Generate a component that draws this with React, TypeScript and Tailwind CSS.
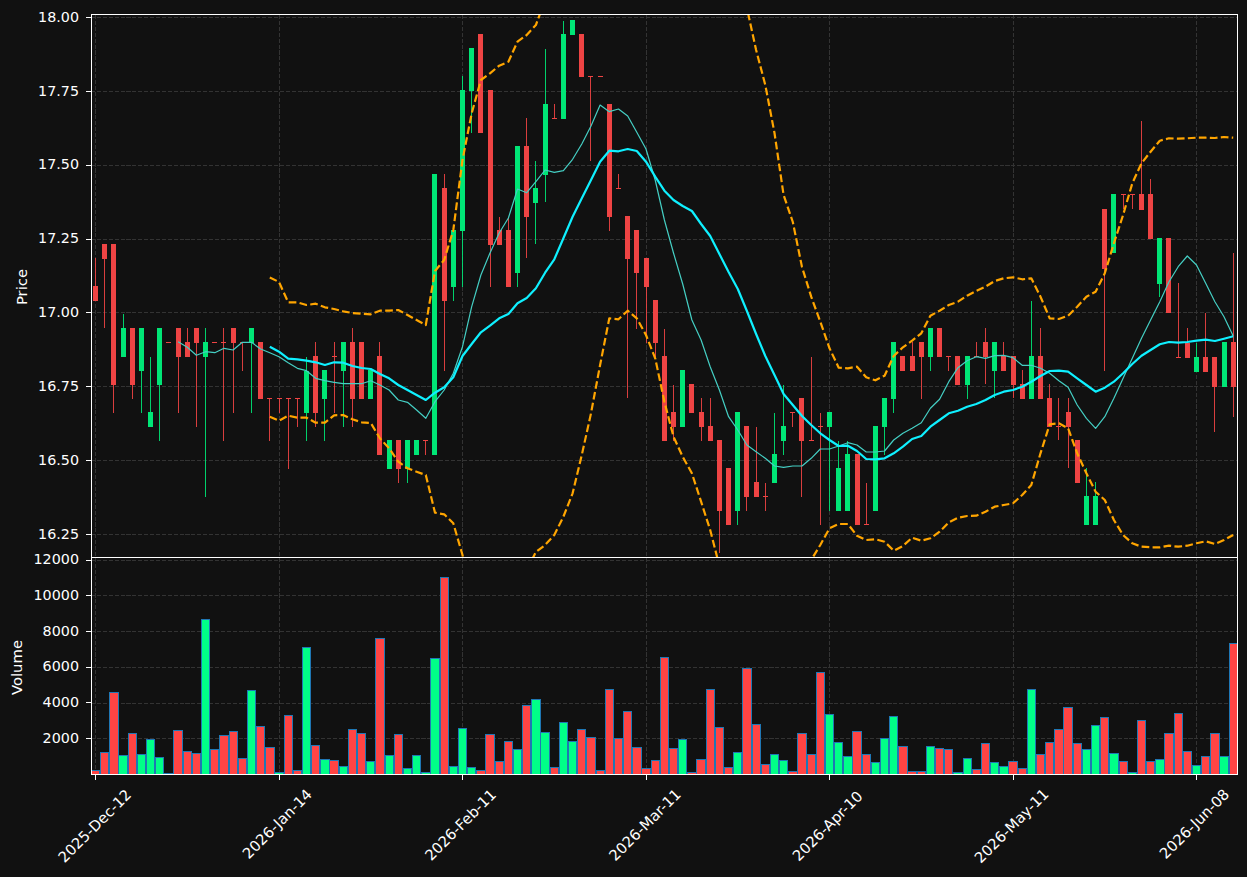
const X = (i: number) => 95.5 + 9.175 * i;

// type, bodyTop, bodyBottom, wickTop, wickBottom (page pixels)
const candles: [string, number, number, number, number][] = [
  ['r',286,301,258,301],['r',244,259,244,328],['r',244,385,244,413],['g',328,357,314,357],['r',328,385,328,399],
  ['g',328,371,328,413],['g',412,427,357,427],['g',328,385,328,441],['r',342,342,342,342],['r',328,357,328,413],
  ['r',342,357,328,357],['r',328,343,328,427],['g',342,357,328,497],['r',342,342,342,342],['r',342,342,328,441],
  ['r',328,343,328,413],['r',342,342,342,371],['g',328,343,328,413],['r',342,399,342,399],['r',398,398,398,441],
  ['r',398,398,398,413],['r',398,398,398,469],['r',398,398,398,427],['g',371,413,357,441],['r',356,413,342,427],
  ['g',370,399,370,441],['r',356,356,342,413],['g',342,371,342,427],['r',342,399,328,427],['r',342,399,342,399],
  ['g',370,399,370,399],['r',356,455,342,455],['g',440,469,440,469],['r',440,469,440,483],['g',440,469,440,483],
  ['g',440,455,440,455],['r',440,440,440,455],['g',174,455,174,455],['r',188,301,174,371],['g',230,287,230,301],
  ['g',90,231,76,287],['g',48,91,48,133],['r',34,133,34,133],['r',90,245,90,287],['r',230,245,217,245],
  ['r',230,287,217,287],['g',146,273,146,287],['r',146,217,118,258],['g',188,203,161,244],['g',104,175,49,202],
  ['r',118,118,104,118],['g',34,119,21,119],['g',20,35,20,35],['r',34,77,34,77],['r',76,76,76,161],
  ['r',76,76,76,76],['r',104,217,104,231],['r',188,188,174,188],['r',216,259,216,398],['r',230,273,230,329],
  ['r',258,287,258,343],['r',300,343,300,357],['r',356,441,329,441],['r',412,427,385,441],['g',370,427,370,427],
  ['r',384,413,384,413],['r',412,427,398,441],['r',426,441,398,441],['r',440,511,440,553],['r',468,525,468,525],
  ['g',412,511,412,525],['r',426,497,426,511],['r',482,497,427,497],['r',496,496,483,511],['g',454,483,413,483],
  ['g',426,441,385,455],['r',412,412,412,427],['r',398,441,398,497],['r',440,440,357,440],['r',426,426,413,525],
  ['g',412,427,412,511],['g',468,511,441,511],['g',454,511,441,511],['r',454,525,454,525],['r',524,524,483,524],
  ['g',426,511,426,511],['g',398,427,398,455],['g',342,399,342,413],['r',356,371,356,371],['r',356,371,342,371],
  ['r',342,357,342,399],['g',328,357,328,371],['r',328,357,328,357],['r',356,356,356,371],['r',356,385,356,385],
  ['g',356,385,356,399],['r',356,356,342,356],['r',342,357,328,384],['g',342,371,342,398],['r',356,371,342,371],
  ['r',356,385,356,398],['r',384,399,370,399],['g',356,399,301,399],['r',356,399,328,399],['r',398,427,384,427],
  ['r',426,426,398,440],['r',412,427,398,468],['r',440,483,440,483],['g',496,525,468,525],['g',496,525,482,525],
  ['r',209,269,209,371],['g',194,253,194,253],['r',194,194,194,209],['r',194,194,194,209],['r',194,210,121,210],
  ['r',194,239,179,239],['g',238,284,238,297],['r',238,313,238,313],['r',357,357,283,357],['r',343,358,328,358],
  ['g',357,372,343,372],['r',357,372,313,372],['r',357,387,357,432],['g',342,387,342,387],['r',342,387,253,417],
];

const volume: [string, number][] = [
  ['r',770.7],['r',752.3],['r',692.7],['g',755.7],['r',733.3],['g',754.3],['g',739.3],['g',757.3],['g',773.7],['r',730.3],
  ['r',751.3],['r',753.3],['g',619.3],['r',749.3],['r',735.3],['r',731.3],['r',758.3],['g',690.3],['r',726.3],['r',747.3],
  ['g',772.3],['r',715.3],['r',770.3],['g',647.3],['r',745.3],['g',759.3],['r',760.3],['g',766.3],['r',729.3],['r',733.3],
  ['g',761.3],['r',638.3],['g',755.3],['r',734.3],['g',768.3],['g',755.3],['g',772.3],['g',658.3],['r',577.3],['g',766.3],
  ['g',728.3],['g',767.3],['r',770.3],['r',734.3],['r',761.3],['r',741.3],['g',749.3],['r',705.3],['g',699.3],['g',732.3],
  ['r',767.3],['g',722.3],['g',741.3],['r',729.3],['r',737.3],['r',770.3],['r',689.3],['r',738.3],['r',711.3],['r',747.3],
  ['r',768.3],['r',760.3],['r',657.3],['r',748.3],['g',739.3],['r',772.3],['r',759.3],['r',689.3],['r',727.3],['r',767.3],
  ['g',752.3],['r',668.3],['r',724.3],['r',764.3],['g',754.3],['g',760.3],['r',771.3],['r',733.3],['r',754.3],['r',672.3],
  ['g',714.3],['g',742.3],['g',756.3],['r',731.3],['r',754.3],['g',762.3],['g',738.3],['g',716.3],['r',746.3],['r',771.3],
  ['r',771.3],['g',746.3],['r',748.3],['r',749.3],['g',772.3],['g',758.3],['r',769.3],['r',743.3],['g',762.3],['g',766.3],
  ['r',761.3],['r',768.3],['g',689.3],['r',754.3],['r',742.3],['r',729.3],['r',707.3],['r',743.3],['g',749.3],['g',725.3],
  ['r',717.3],['g',753.3],['r',761.3],['g',772.3],['r',720.3],['r',761.3],['g',759.3],['r',733.3],['r',713.3],['r',751.3],
  ['g',765.3],['r',756.3],['r',733.3],['g',756.3],['r',643.3],
];

const cyan = [346.7,351.7,358.7,359.3,360.7,362.3,365,362.3,362.7,366,368,369,374,378.3,385,390,395,400,392.7,387.3,
  377.3,356,344,332.3,325.7,318.3,314,303.3,298,288.3,272.7,259.3,238.3,216.7,198.3,180,161.7,150.7,151.3,149,
  151,161.7,176.7,190.7,200,206,211,224,236,254,272,289,311,334,356,375,394,405,416,425,
  433.3,440,446,445.7,451,459,459.3,458.3,453.3,446.7,439,436,426.7,420,413.3,410.7,406.7,404,400,395,
  391.7,390,386.7,381.7,376,371,370.7,371.7,378.3,385,391.7,387.7,381.7,373.3,364,355.7,350,344.3,342,342.7,
  342,340.7,339.7,341,338.7,336.3];
const teal = [341.7,347.3,355.3,351.7,352.7,348.3,350,342.3,342.3,349,352.7,356.7,362.7,368.3,370.7,378.3,380.7,382.3,383.7,383.7,
  383.7,380.7,385,390,400,402.3,410,418.3,401.7,390,373.3,346.7,306.7,275,253,233,218,189,192.7,181.7,
  170,172.3,170.7,159.3,144,126,105,111.7,109,116,132.3,149,180,220,253,284,320,340,366.7,390,
  416.7,430,445,451.7,458.3,466,467.3,466,466,458.3,449,449,446,442.7,445,452,452,451,440,433.3,
  428.3,422.7,408.3,399.3,381.7,367.7,360.7,356.7,358.3,355.7,355.3,357.7,365.3,365.3,368.3,373.3,380.7,387.3,405,418.3,
  428.3,416.7,398.3,378.3,358.3,338.3,320,301.7,281.7,266.7,256,265,283.3,301.7,316.7,336];
const upperA = [277.5,282,302.3,302.3,305,303.7,307.3,309,311.3,313,313.7,314.3,310.7,310.7,310,315,320,325,271,260,
  230,160,113.3,80,73.3,65.7,61.7,41.7,35,25,0];
const upperB = [-30,8,50,85,133,195,222,267,296.7,321.7,348.3,367.7,368.3,366.7,377.3,380.3,375.7,356,347.3,340.7,
  333.3,315.7,310.7,305,301.7,295.7,291,286.7,281,278.3,277.3,279.3,278.3,296.7,318.3,319,315.7,306.7,296.7,291.7,
  273.3,243.3,215,183.3,163.3,151.7,140.7,138.3,138.7,138.3,137.7,137.7,138,137,137.7];
const lowerA = [416.7,420.7,415.7,417.7,417.7,422.7,422.7,415.3,415,419.3,422.3,423,438.3,448.3,461.7,468.3,471.7,475,512.7,514.3,
  523.3,555,600];
const lowerB = [570,552,545,535,516.7,493.3,455,413.3,365,318.3,319.3,310.7,318.3,335,358.3,401.7,436.7,456.7,473.3,501.7,530,566,620];
const lowerC = [610,560,545,528.3,524,524,535.7,540,539.3,541.7,550.7,546,537.7,540.7,538.3,531.7,522.3,517.7,516,515.7,
  511.7,506.7,505,503.3,495,485,453.3,424.3,423.3,428.3,453.3,473.3,491.7,500,520,535,543.3,546.7,547.3,547.3,
  545.7,546.7,545.7,543.3,541.3,544,540,535];

const pts = (ys: number[], start: number) => ys.map((y, k) => `${X(start + k).toFixed(1)},${y}`).join(' ');
const gridX = [0, 20, 40, 60, 80, 100, 120].map(X);
const priceLines = [17.5, 91.3, 165.2, 239, 312.9, 386.7, 460.6, 534.4];
const priceLabels = ['18.00', '17.75', '17.50', '17.25', '17.00', '16.75', '16.50', '16.25'];
const volumeLines = [560, 595.7, 631.5, 667.2, 703, 738.7];
const volumeLabels = ['12000', '10000', '8000', '6000', '4000', '2000'];
const font = { fontFamily: '"DejaVu Sans", sans-serif' };

function Grid({ ys, y1, y2 }: { ys: number[]; y1: number; y2: number }) {
  return (
    <g stroke="#333333" strokeWidth={1} strokeDasharray="4.1 1.8" shapeRendering="crispEdges">
      {gridX.map((x) => <line key={x} x1={x} x2={x} y1={y1} y2={y2} />)}
      {ys.map((y) => <line key={y} x1={91} x2={1237} y1={y} y2={y} />)}
    </g>
  );
}

function TickRow({ label }: { label: string }) {
  return (
    <div className="flex h-0 items-center justify-end gap-[7px]">
      <span>{label}</span>
      <span className="h-px w-[5px] bg-white" />
    </div>
  );
}

function DateTick({ label, mt, left }: { label: string; mt: string; left: string }) {
  return (
    <div className="w-[183.5px] shrink-0">
      <div className="h-[5px] w-px bg-white" />
      <div className={`flex h-0 w-px items-center justify-center text-[14.8px] ${mt} ${left}`}>
        <span className="shrink-0 -rotate-45 whitespace-nowrap">{label}</span>
      </div>
    </div>
  );
}

export default function App() {
  return (
    <div className="h-[877px] w-[1247px] overflow-hidden bg-[#111111] pt-[14px] text-[14.3px] text-white" style={font}>
      <div className="flex h-[544px]">
        <div className="flex w-[91px]">
          <div className="flex w-[30px] items-center justify-center pl-[15px] pt-[2px] text-[14.8px]">
            <span className="rotate-180 [writing-mode:vertical-rl]">Price</span>
          </div>
          <div className="flex flex-1 flex-col gap-[73.85px] pt-[3.5px]">
            {priceLabels.map((l) => <TickRow key={l} label={l} />)}
          </div>
        </div>
        <div className="h-[544px] w-[1147px] border border-white">
          <svg viewBox="92 15 1145 542" width={1145} height={542} className="block">
            <Grid ys={priceLines} y1={15} y2={557} />
            {candles.map(([c, top, bottom, wt, wb], i) => {
              const color = c === 'r' ? '#ef4444' : '#00e676';
              const x = Math.floor(X(i));
              return (
                <g key={i} fill={color} shapeRendering="crispEdges">
                  <rect x={x} y={wt} width={1} height={Math.max(wb - wt, 1)} opacity={0.9} />
                  <rect x={x - 2} y={top} width={5} height={Math.max(bottom - top, 1)} />
                </g>
              );
            })}
            <g fill="none" strokeLinejoin="round">
              <polyline points={pts(teal, 9)} stroke="#45cfc4" strokeWidth={1.2} />
              <polyline points={pts(cyan, 19)} stroke="#0ff0ff" strokeWidth={2.2} />
              <g stroke="#ffa500" strokeWidth={2.2} strokeDasharray="7.7 3.3">
                <polyline points={pts(upperA, 19)} />
                <polyline points={pts(upperB, 70)} />
                <polyline points={pts(lowerA, 19)} />
                <polyline points={pts(lowerB, 47)} />
                <polyline points={pts(lowerC, 77)} />
              </g>
            </g>
          </svg>
        </div>
      </div>

      <div className="-mt-px flex h-[218px]">
        <div className="flex w-[91px]">
          <div className="flex w-[26px] items-center justify-center pl-[8px] pt-[3px] text-[14.8px]">
            <span className="rotate-180 [writing-mode:vertical-rl]">Volume</span>
          </div>
          <div className="flex flex-1 flex-col gap-[35.74px] pt-[3px]">
            {volumeLabels.map((l) => <TickRow key={l} label={l} />)}
          </div>
        </div>
        <div className="h-[218px] w-[1147px] border border-white">
          <svg viewBox="92 558 1145 216" width={1145} height={216} className="block">
            <Grid ys={volumeLines} y1={558} y2={774} />
            {volume.map(([c, top], i) => {
              const left = Math.floor(X(i) - 4.1);
              const right = Math.floor(X(i) + 4.2);
              const y = Math.floor(top) + 0.5;
              return (
                <rect
                  key={i}
                  x={left + 0.5}
                  y={y}
                  width={right - left}
                  height={775 - y}
                  fill={c === 'r' ? '#ff4444' : '#00ff88'}
                  stroke="#1f77b4"
                  strokeWidth={1}
                />
              );
            })}
          </svg>
        </div>
      </div>

      <div className="flex pl-[95px]">
        <DateTick label="2025-Dec-12" mt="mt-[46px]" left="ml-[-1px]" />
        <DateTick label="2026-Jan-14" mt="mt-[44px]" left="ml-[-2px]" />
        <DateTick label="2026-Feb-11" mt="mt-[45px]" left="ml-[-2px]" />
        <DateTick label="2026-Mar-11" mt="mt-[45px]" left="ml-[-1px]" />
        <DateTick label="2026-Apr-10" mt="mt-[46px]" left="ml-[-2px]" />
        <DateTick label="2026-May-11" mt="mt-[46px]" left="ml-[-1px]" />
        <DateTick label="2026-Jun-08" mt="mt-[44px]" left="ml-[-2px]" />
      </div>
    </div>
  );
}
